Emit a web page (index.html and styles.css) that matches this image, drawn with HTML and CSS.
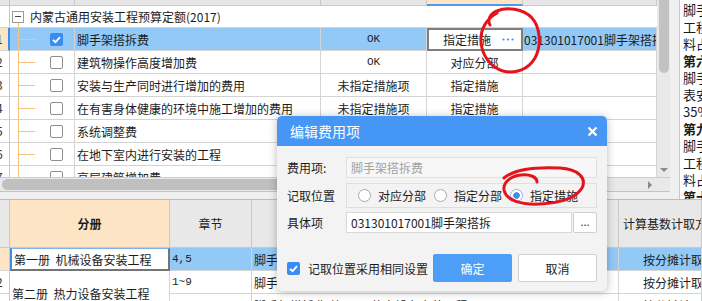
FILE: index.html
```html
<!DOCTYPE html>
<html lang="zh-CN">
<head>
    <meta charset="UTF-8">
    <meta name="viewport" content="width=device-width, initial-scale=1.0">
    <title>编辑费用项</title>
    <link rel="stylesheet" href="styles.css">
</head>
<body>
<div class="app">

    <!-- upper grid + notes -->
    <div class="top">
        <div class="left-pane">
            <div class="grid-area">
                <div class="grid">
                    <div class="grid-head">
                        <span></span><span></span><span></span><span></span><span class="active"></span><span></span>
                    </div>
                    <div class="root-row">
                        <span class="rn"></span>
                        <span class="root-cell"><i class="fold"></i>内蒙古通用安装工程预算定额(2017)</span>
                    </div>
                    <div class="row selected">
                        <span class="rn cur">1</span>
                        <span class="tree"><i class="chk on"><svg width="13" height="13" viewBox="0 0 13 13"><polyline points="3,6.8 5.5,9.2 10,4.2" fill="none" stroke="#fff" stroke-width="1.8"/></svg></i></span>
                        <span class="name">脚手架搭拆费</span>
                        <span class="state mono">OK</span>
                        <span class="editor"><b>指定措施</b><em><svg width="12" height="3" viewBox="0 0 12 3"><circle cx="1.5" cy="1.5" r="1.1" fill="#3d8ef0"/><circle cx="6" cy="1.5" r="1.1" fill="#3d8ef0"/><circle cx="10.5" cy="1.5" r="1.1" fill="#3d8ef0"/></svg></em></span>
                        <span class="item">031301017001脚手架搭拆费</span>
                    </div>
                    <div class="row">
                        <span class="rn">2</span>
                        <span class="tree"><i class="chk"></i></span>
                        <span class="name">建筑物操作高度增加费</span>
                        <span class="state mono">OK</span>
                        <span class="pos">对应分部</span>
                        <span class="item"></span>
                    </div>
                    <div class="row">
                        <span class="rn">3</span>
                        <span class="tree"><i class="chk"></i></span>
                        <span class="name">安装与生产同时进行增加的费用</span>
                        <span class="state">未指定措施项</span>
                        <span class="pos">指定措施</span>
                        <span class="item"></span>
                    </div>
                    <div class="row">
                        <span class="rn">4</span>
                        <span class="tree"><i class="chk"></i></span>
                        <span class="name">在有害身体健康的环境中施工增加的费用</span>
                        <span class="state">未指定措施项</span>
                        <span class="pos">指定措施</span>
                        <span class="item"></span>
                    </div>
                    <div class="row">
                        <span class="rn">5</span>
                        <span class="tree"><i class="chk"></i></span>
                        <span class="name">系统调整费</span>
                        <span class="state">未指定措施项</span>
                        <span class="pos">指定措施</span>
                        <span class="item"></span>
                    </div>
                    <div class="row">
                        <span class="rn">6</span>
                        <span class="tree"><i class="chk"></i></span>
                        <span class="name">在地下室内进行安装的工程</span>
                        <span class="state">未指定措施项</span>
                        <span class="pos">指定措施</span>
                        <span class="item"></span>
                    </div>
                    <div class="row">
                        <span class="rn">7</span>
                        <span class="tree"><i class="chk"></i></span>
                        <span class="name">高层建筑增加费</span>
                        <span class="state">未指定措施项</span>
                        <span class="pos">指定措施</span>
                        <span class="item"></span>
                    </div>
                </div>
                <div class="vscroll">
                    <div class="vthumb"></div>
                    <i class="arrow-down"></i>
                </div>
                <div class="hscroll">
                    <div class="hthumb"></div>
                    <i class="arrow-right"></i>
                </div>
                <div class="corner"></div>
            </div>
        </div>
        <div class="notes">
            <p>脚手架搭拆费按定额人工费的</p>
            <p>工程中脚手架搭拆费的</p>
            <p>料占比例</p>
            <p class="b">第六册 自动化控制仪表</p>
            <p>脚手架搭拆费按定额</p>
            <p>表安装工程</p>
            <p>35%</p>
            <p class="b">第九册 通风空调工程</p>
            <p>脚手架搭拆费按定额</p>
            <p>工程中脚手架搭拆费</p>
            <p>料占比例</p>
            <p class="b">第十册</p>
        </div>
    </div>

    <!-- lower grid -->
    <div class="bottom">
        <span class="h rn"></span>
        <span class="h hot">分册</span>
        <span class="h">章节</span>
        <span class="h">名称</span>
        <span class="h left">计算基数计取方式</span>

        <span class="rn cur"></span>
        <span class="book-edit">第一册&nbsp;&nbsp;机械设备安装工程</span>
        <span class="sel mono">4,5</span>
        <span class="sel">脚手架搭拆费(第一册&nbsp;&nbsp;机械设备安装工程)</span>
        <span class="sel way">按分摊计取</span>

        <span class="rn">2</span>
        <span class="book">第二册&nbsp;&nbsp;热力设备安装工程</span>
        <span class="mono">1~9</span>
        <span>脚手架搭拆费(第二册&nbsp;&nbsp;热力设备安装工程)</span>
        <span class="way">按分摊计取</span>

        <span class="rn">3</span>
        <span class="mono"></span>
        <span>脚手架搭拆费(第二册&nbsp;&nbsp;热力设备安装工程)</span>
        <span class="way">按分摊计取</span>
    </div>

    <!-- dialog -->
    <div class="dialog">
        <div class="dlg-title">
            <span>编辑费用项</span>
            <svg class="close" width="11" height="11" viewBox="0 0 11 11"><path d="M1.5 1.5 L9.5 9.5 M9.5 1.5 L1.5 9.5" stroke="#fff" stroke-width="2.2"/></svg>
        </div>
        <div class="dlg-body">
            <div class="field">
                <label>费用项:</label>
                <div class="input readonly">脚手架搭拆费</div>
            </div>
            <div class="field">
                <label>记取位置</label>
                <div class="radio-box">
                    <span class="radio"><i></i>对应分部</span>
                    <span class="radio"><i></i>指定分部</span>
                    <span class="radio on"><i></i>指定措施</span>
                </div>
            </div>
            <div class="field">
                <label>具体项</label>
                <div class="input">031301017001脚手架搭拆</div>
                <button class="more">...</button>
            </div>
            <div class="dlg-foot">
                <span class="same"><i class="chk on"><svg width="13" height="13" viewBox="0 0 13 13"><polyline points="3,6.8 5.5,9.2 10,4.2" fill="none" stroke="#fff" stroke-width="1.8"/></svg></i>记取位置采用相同设置</span>
                <button class="btn primary">确定</button>
                <button class="btn">取消</button>
            </div>
        </div>
    </div>

    <!-- red pen marks -->
    <svg class="marks" width="702" height="301" viewBox="0 0 702 301">
        <path d="M490 25 C487 20 490 14 497 11 C506 7 523 8 532 18 C540 27 542 45 535 58 C528 70 515 74 503 71 C490 67 482 55 481 42 C480 30 486 19 497 13" />
        <path d="M537 182 C537 177 530 174 521 175 C511 176 503 182 504 190 C506 200 520 205 540 204 C560 203 576 198 582 188 C587 178 578 169 560 168 C540 167 516 168 504 178" />
    </svg>
</div>
</body>
</html>
```

FILE: styles.css
```css
/* Base */
* {
    box-sizing: border-box;
}

body {
    margin: 0;
    font-family: "Noto Sans CJK SC", "Noto Sans", sans-serif;
    font-size: 12px;
    color: #1c1c1c;
    background: #fff;
}

.app {
    position: relative;
    width: 702px;
    height: 301px;
    overflow: hidden;
}

.mono {
    font-family: "Liberation Mono", monospace;
    font-size: 11px;
}

/* Upper area */
.top {
    display: flex;
    height: 200px;
    border-bottom: 1px solid #bdbdbd;
}

.left-pane {
    width: 679px;
    background: #f0f0f0;
}

.grid-area {
    display: grid;
    grid-template-columns: 657px 13px;
    grid-template-rows: 177px 14px;
    width: 670px;
    height: 192px;
    border-bottom: 1px solid #c4c4c4;
    background: #fff;
}

.grid {
    overflow: hidden;
}

.grid-head,
.row {
    display: grid;
    grid-template-columns: 10px 65px 246px 106px 96px 134px;
}

.grid-head {
    height: 6px;
    background: #e6e6e6;
}

.grid-head span {
    border-right: 1px solid #c8c8c8;
    border-bottom: 1px solid #c8c8c8;
}

.grid-head .active {
    background: #fde4c5;
    border-bottom: 2px solid #4b9bf5;
}

.root-row {
    display: grid;
    grid-template-columns: 10px 1fr;
    height: 22px;
}

.root-cell {
    display: flex;
    align-items: center;
    padding-left: 2px;
    border-bottom: 1px solid #d4d4d4;
    background: linear-gradient(#f6c27f, #f6c27f) 8px 17px / 1px 5px no-repeat;
}

.fold {
    width: 12px;
    height: 12px;
    margin-right: 6px;
    border: 1px solid #9a9a9a;
    background: linear-gradient(#444, #444) center / 6px 1px no-repeat, #fff;
}

.row {
    height: 23px;
}

.row > span,
.root-row > span {
    display: flex;
    align-items: center;
    white-space: nowrap;
    overflow: hidden;
    border-bottom: 1px solid #d4d4d4;
}

.row > span {
    border-right: 1px solid #d4d4d4;
}

/* row number column: only a sliver of the number shows */
.row > .rn,
.root-row > .rn,
.bottom > .rn {
    display: block;
    padding: 0;
    text-indent: -4px;
    line-height: 22px;
    border-right: 1px solid #c8c8c8;
    color: #333;
}

.row .rn.cur {
    background: #fde4c5;
    border-right: 2px solid #3b8ee8;
}

.tree {
    padding-left: 40px;
    background:
        linear-gradient(#f6c27f, #f6c27f) 8px 0 / 1px 100% no-repeat,
        linear-gradient(#f6c27f, #f6c27f) 8px 11px / 17px 1px no-repeat;
}

.name {
    padding-left: 2px;
}

.state,
.pos {
    justify-content: center;
}

.item {
    padding-left: 1px;
}

.row.selected > span:not(.rn):not(.editor) {
    background-color: #92c9f6;
}

.editor {
    background: #fff;
    border: 2px solid #7e7e7e !important;
}

.editor b {
    flex: 1;
    font-weight: normal;
    text-align: center;
    padding-left: 4px;
}

.editor em {
    display: flex;
    width: 20px;
    padding-left: 1px;
}

/* Checkboxes */
.chk {
    display: inline-flex;
    flex-shrink: 0;
    width: 13px;
    height: 13px;
    border: 1px solid #8e8e8e;
    border-radius: 2px;
    background: #fff;
}

.chk.on {
    border: none;
    background: #3b8cf2;
}

/* Scrollbars */
.vscroll {
    display: flex;
    flex-direction: column;
    align-items: center;
    justify-content: space-between;
    background: #e9e9e9;
    padding-bottom: 5px;
}

.vthumb {
    width: 10px;
    height: 73px;
    background: #c2c2c2;
    border-radius: 0 0 5px 5px;
}

.arrow-down {
    border-left: 4px solid transparent;
    border-right: 4px solid transparent;
    border-top: 4px solid #8a8a8a;
}

.hscroll {
    display: flex;
    align-items: center;
    justify-content: space-between;
    padding: 0 5px 0 2px;
    background: #e9e9e9;
    border-top: 1px solid #cdcdcd;
}

.hthumb {
    width: 570px;
    height: 11px;
    background: #c0c0c0;
    border-radius: 6px;
}

.arrow-right {
    border-top: 4px solid transparent;
    border-bottom: 4px solid transparent;
    border-left: 4px solid #8a8a8a;
}

.corner {
    background: #e9e9e9;
    border-top: 1px solid #cdcdcd;
}

/* Notes on the right */
.notes {
    width: 23px;
    height: 199px;
    overflow: hidden;
    padding: 1px 0 0 3px;
    background: #fff;
    border-left: 1px solid #c8c8c8;
    font-size: 13px;
    line-height: 17px;
}

.notes p {
    margin: 0;
    white-space: nowrap;
}

.notes .b {
    font-weight: bold;
}

/* Lower grid */
.bottom {
    display: grid;
    grid-template-columns: 10px 160px 82px 367px 83px;
    grid-template-rows: 48px 23px 23px 23px;
}

.bottom > span {
    display: flex;
    align-items: center;
    white-space: nowrap;
    overflow: hidden;
    padding-left: 2px;
    border-right: 1px solid #d4d4d4;
    border-bottom: 1px solid #d4d4d4;
}

.bottom .h {
    justify-content: center;
    padding: 0;
    background: #e8e8e8;
    border-right: 1px solid #c8c8c8;
    border-bottom: 1px solid #c8c8c8;
}

.bottom .h.hot {
    background: #fde4c5;
    font-weight: bold;
}

.bottom .h.left {
    justify-content: flex-start;
    padding-left: 4px;
}

.bottom .rn.cur {
    background: #fde4c5;
}

.bottom .book-edit {
    background: #fff;
    border-left: 2px solid #3b8be6;
    border-top: 1px solid #7fb1ec;
    border-right: 2px solid #747474;
    border-bottom: 2px solid #747474;
}

.bottom .book {
    grid-row: span 2;
}

.bottom .sel {
    background: #92c9f6;
}

.bottom .way {
    padding-left: 24px;
}

/* Dialog */
.dialog {
    position: absolute;
    left: 277px;
    top: 116px;
    width: 330px;
    border-radius: 5px;
    overflow: hidden;
    background: #f3f3f3;
    box-shadow: 0 1px 9px rgba(0, 0, 0, 0.28);
}

.dlg-title {
    display: flex;
    align-items: center;
    justify-content: space-between;
    height: 30px;
    padding: 0 9px 0 13px;
    background: #4697f5;
    color: #fff;
    font-size: 14px;
}

.dlg-body {
    display: flex;
    flex-direction: column;
    padding: 11px 10px 9px 10px;
}

.field {
    display: flex;
    align-items: center;
}

.field label {
    width: 59px;
    font-size: 12px;
}

.input {
    flex: 1;
    height: 21px;
    display: flex;
    align-items: center;
    padding-left: 4px;
    background: #fff;
    border: 1px solid #d8d8d8;
    white-space: nowrap;
    overflow: hidden;
}

.input.readonly {
    background: #f7f7f7;
    border-color: #e0e0e0;
    color: #a2a2a2;
}

.radio-box {
    flex: 1;
    height: 25px;
    margin: 5px 0 4px;
    display: flex;
    align-items: center;
    padding-left: 11px;
    border: 1px solid #dedede;
}

.radio {
    display: flex;
    align-items: center;
    margin-right: 8px;
}

.radio i {
    width: 13px;
    height: 13px;
    margin-right: 7px;
    border: 1px solid #a9a9a9;
    border-radius: 50%;
    background: #fff;
}

.radio.on i {
    border-color: #8fb6e6;
    background: radial-gradient(circle, #3d8ef0 0 3px, #fff 3.5px);
}

.field .input + .more {
    margin-left: 1px;
}

.more {
    width: 24px;
    height: 21px;
    padding: 0 0 4px;
    background: #fff;
    border: 1px solid #cfcfcf;
    border-radius: 2px;
    font-family: inherit;
    font-size: 11px;
    color: #333;
}

.dlg-foot {
    display: flex;
    align-items: center;
    margin-top: 21px;
}

.same {
    flex: 1;
    display: flex;
    align-items: center;
    white-space: nowrap;
}

.same .chk {
    margin-right: 8px;
}

.btn {
    flex-shrink: 0;
    width: 79px;
    height: 28px;
    margin-left: 6px;
    border: 1px solid #cfcfcf;
    border-radius: 2px;
    background: #fff;
    font-family: inherit;
    font-size: 12px;
    color: #1c1c1c;
}

.btn.primary {
    margin-left: 0;
    border-color: #4c9ef7;
    background: #4c9ef7;
    color: #fff;
}

/* Pen marks drawn on the screenshot */
.marks {
    position: absolute;
    left: 0;
    top: 0;
    pointer-events: none;
}

.marks path {
    fill: none;
    stroke: #e5141c;
    stroke-width: 3;
    stroke-linecap: round;
}
```
